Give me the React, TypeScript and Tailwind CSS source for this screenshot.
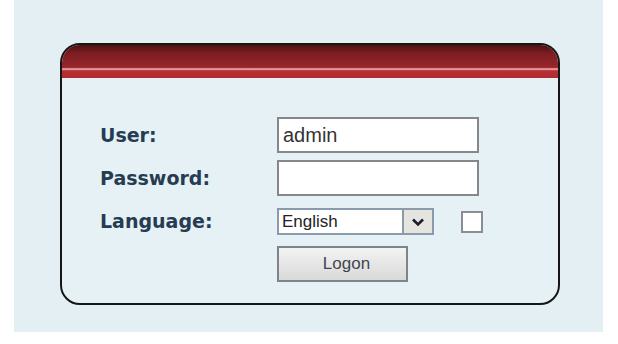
export default function App() {
  return (
    <div className="h-[344px] w-[618px] bg-white">
      <div className="ml-[14px] h-[332px] w-[589px] bg-[#e3eff3] pl-[46px] pt-[43px]">
        <div className="h-[262px] w-[500px] overflow-hidden rounded-[20px] border-2 border-[#161616] bg-[#e6f1f5]">
          <div className="h-[33px] bg-[linear-gradient(180deg,#4a1114_0%,#7d1d22_25%,#8e2329_55%,#97262c_68%,#d98084_70%,#e29a9c_74%,#b52f35_78%,#b02a30_100%)]" />
          <div className="grid grid-cols-[177px_1fr] gap-y-[7px] pl-[38px] pt-[39px] font-['DejaVu_Sans',sans-serif] text-[19px] font-bold text-[#263c52]">
            <div className="flex h-[36px] items-center">User:</div>
            <div className="flex h-[36px] w-[202px] items-center border-2 border-[#84888b] bg-white pl-[4px] font-['Liberation_Sans',sans-serif] text-[20px] font-normal text-[#333]">
              admin
            </div>
            <div className="flex h-[36px] items-center">Password:</div>
            <div className="h-[36px] w-[202px] border-2 border-[#84888b] bg-white" />
            <div className="mt-[5px] flex h-[27px] items-center">Language:</div>
            <div className="mt-[5px] flex h-[27px] items-center">
              <div className="flex h-[27px] w-[157px] border-2 border-[#8a9bac] bg-white">
                <div className="flex flex-1 items-center pl-[3px] font-['Liberation_Sans',sans-serif] text-[17px] font-normal text-[#222]">
                  English
                </div>
                <div className="flex w-[30px] items-center justify-center border-l-2 border-[#8a9bac] bg-[#e6e4df]">
                  <svg width="14" height="10" viewBox="0 0 14 10">
                    <path d="M2 2.5 L7 7.5 L12 2.5" fill="none" stroke="#1c1c2a" strokeWidth="2.6" />
                  </svg>
                </div>
              </div>
              <div className="ml-[27px] h-[22px] w-[22px] border-2 border-[#8a8e92] bg-white" />
            </div>
            <div className="mt-[4px]" />
            <div className="mt-[4px] flex h-[36px] w-[131px] items-center justify-center border-2 border-[#7e8488] bg-[linear-gradient(180deg,#f3f3f3,#d9d9d9)] pl-[8px] font-['Liberation_Sans',sans-serif] text-[17px] font-normal text-[#3e4650]">
              Logon
            </div>
          </div>
        </div>
      </div>
    </div>
  );
}
